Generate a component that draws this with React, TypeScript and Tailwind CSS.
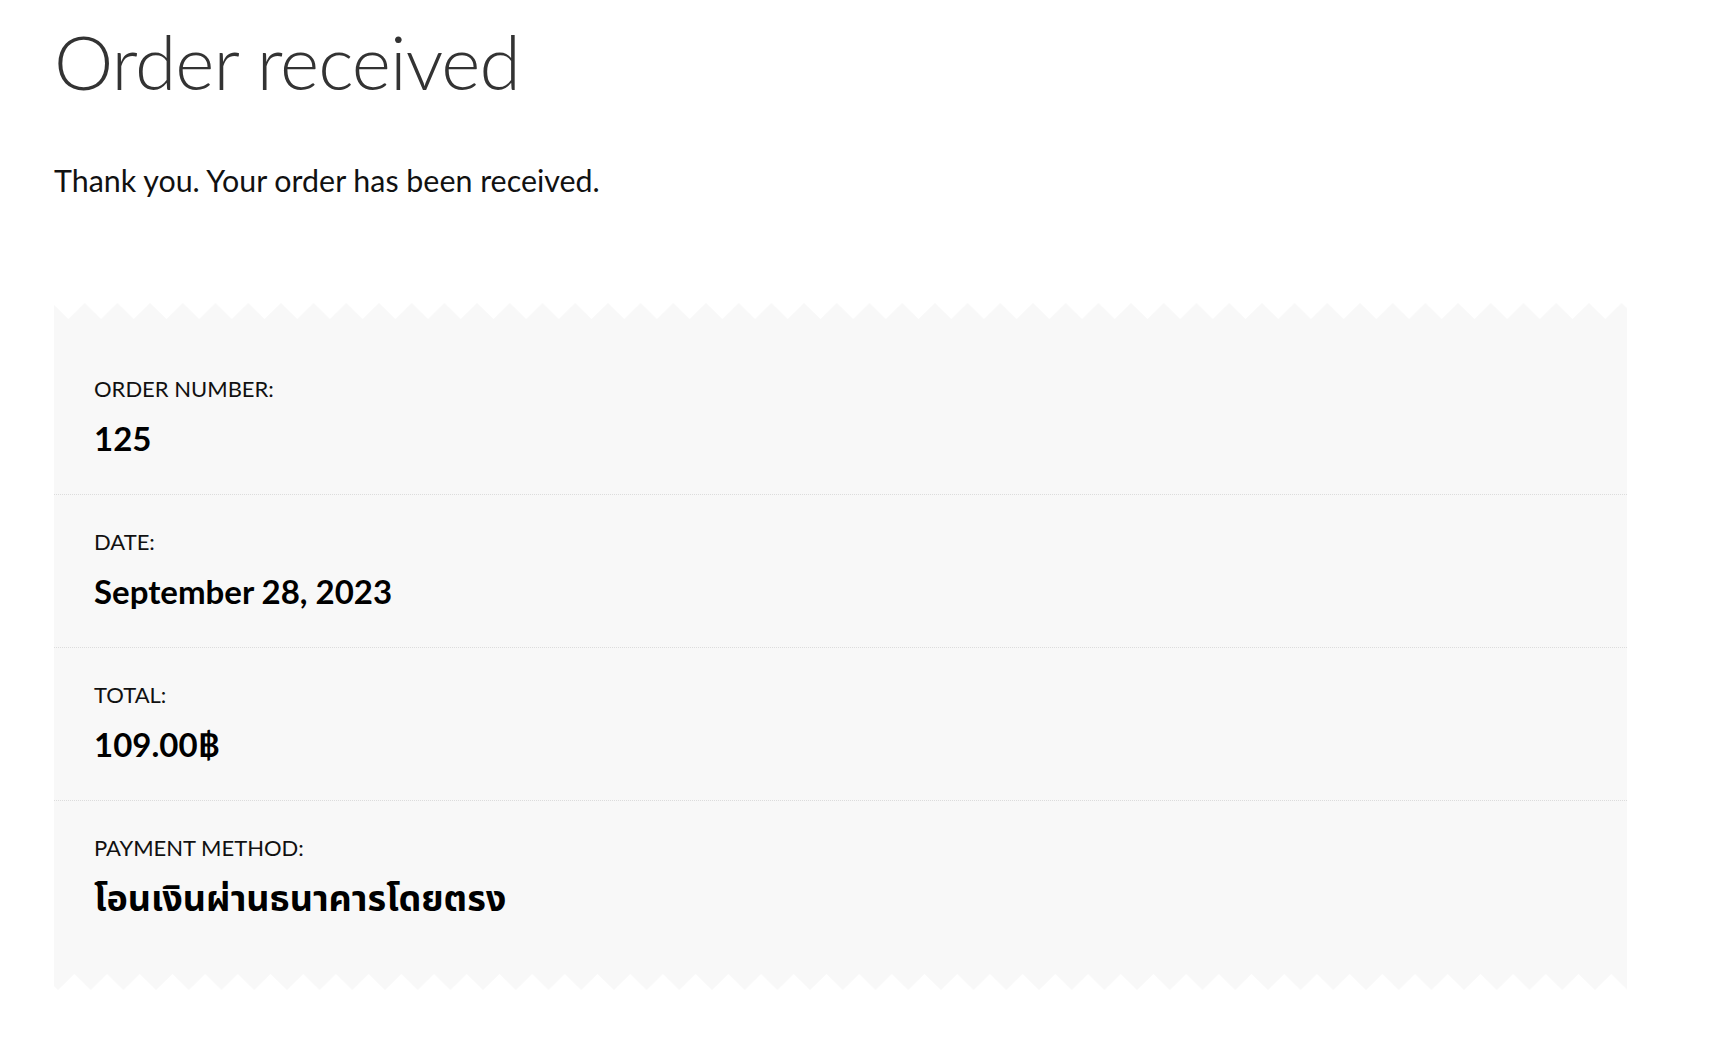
import React from 'react';

const rows = [
  { label: 'Order number:', value: '125', thai: false },
  { label: 'Date:', value: 'September 28, 2023', thai: false },
  { label: 'Total:', value: '109.00฿', thai: false },
  { label: 'Payment method:', value: 'โอนเงินผ่านธนาคารโดยตรง', thai: true },
];

function ZigzagTop() {
  return (
    <svg className="block w-full h-4" preserveAspectRatio="none">
      <defs>
        <pattern id="zz-top" width="32.7" height="16" patternUnits="userSpaceOnUse" x="-2">
          <polygon points="0,0 16.35,16 32.7,0 32.7,16 0,16" fill="#f8f8f8" />
        </pattern>
      </defs>
      <rect width="100%" height="16" fill="url(#zz-top)" />
    </svg>
  );
}

function ZigzagBottom() {
  return (
    <svg className="block w-full h-4" preserveAspectRatio="none">
      <defs>
        <pattern id="zz-bottom" width="32.7" height="16" patternUnits="userSpaceOnUse" x="4">
          <polygon points="0,0 32.7,0 32.7,16 16.35,0 0,16" fill="#f8f8f8" />
        </pattern>
      </defs>
      <rect width="100%" height="16" fill="url(#zz-bottom)" />
    </svg>
  );
}

export default function App() {
  return (
    <div className="min-h-[1057px] bg-white font-['Lato','Noto_Sans_Thai','Noto_Sans',sans-serif]">
      <div className="ml-[54px] w-[1573px]">
        <h1 className="pt-[24px] text-[75px] font-light leading-none tracking-[-1px] text-[#333333]">
          Order received
        </h1>

        <p className="mt-[66px] text-[30.4px] leading-none text-[#111111]">
          Thank you. Your order has been received.
        </p>

        <div className="mt-[108px]">
          <ZigzagTop />
          <ul className="bg-[#f8f8f8] pt-[23px] pb-[21px]">
            {rows.map((row, i) => (
              <li
                key={row.label}
                className={
                  'px-[40px] pt-[36px] pb-[39px] ' +
                  (i < rows.length - 1 ? 'border-b border-dotted border-[#dcdcdc]' : '')
                }
              >
                <div className="text-[22px] leading-none uppercase text-[#111111]">{row.label}</div>
                <strong
                  className={
                    'mt-[22px] block h-[33px] font-bold leading-[33px] text-black whitespace-nowrap ' +
                    (row.thai ? 'text-[36px]' : 'text-[33px]')
                  }
                >
                  {row.value}
                </strong>
              </li>
            ))}
          </ul>
          <ZigzagBottom />
        </div>
      </div>
    </div>
  );
}
